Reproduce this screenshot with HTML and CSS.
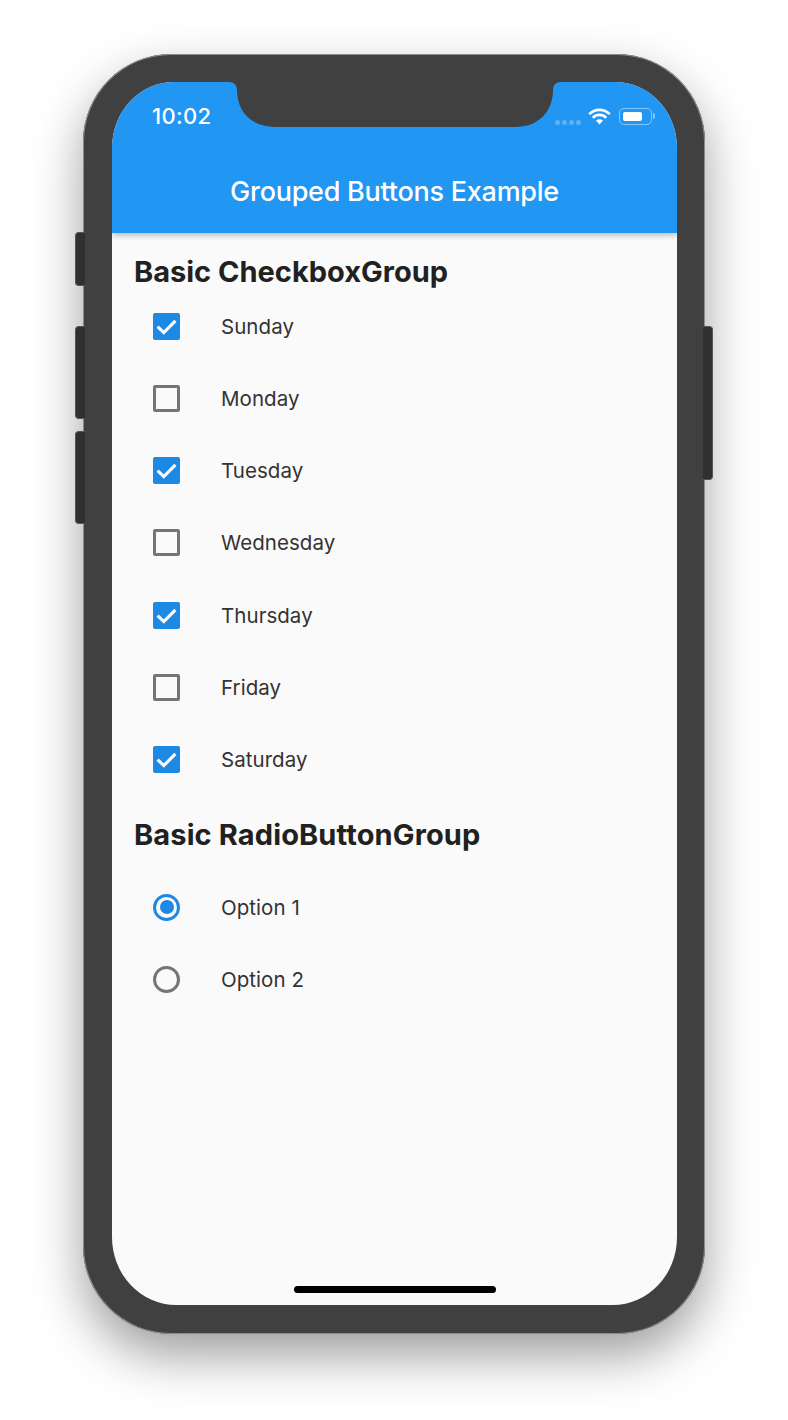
FILE: index.html
```html
<!DOCTYPE html>
<html lang="en">
<head>
<meta charset="utf-8">
<title>Grouped Buttons Example</title>
<link rel="stylesheet" href="styles.css">
</head>
<body>
<div class="stage">
  <div class="phone">
    <span class="side side-l1"></span>
    <span class="side side-l2"></span>
    <span class="side side-l3"></span>
    <span class="side side-r1"></span>
    <main class="screen">
      <header class="appbar">
        <div class="status">
          <span class="time">10:02</span>
          <div class="status-icons">
            <div class="signal"><i></i><i></i><i></i><i></i></div>
            <svg class="wifi" width="23" height="17" viewBox="0 0 23 17"><path d="M1.2 6.2A14.5 14.5 0 0 1 21.8 6.2M4.8 9.8A9.2 9.2 0 0 1 18.2 9.8" fill="none" stroke="#fff" stroke-width="2.6"/><path d="M8 12.6A5 5 0 0 1 15 12.6L11.5 16.6Z" fill="#fff"/></svg>
            <div class="battery"><div class="battery-fill"></div></div>
          </div>
        </div>
        <h1 class="title">Grouped Buttons Example</h1>
      </header>
      <svg class="notch" width="336" height="45" viewBox="0 0 336 45"><path d="M2 0C7 0 10 3 10 8C10 29 24 45 48 45H288C312 45 326 29 326 8C326 3 329 0 334 0Z" fill="#404040"/></svg>
      <section class="content">
        <h2 class="heading">Basic CheckboxGroup</h2>
        <ul class="group">
          <li class="row"><span class="box on"><svg width="27" height="27" viewBox="0 0 27 27"><path d="M4.6 13.6L10.8 19.6L22.4 7.8" fill="none" stroke="#fafafa" stroke-width="3.2"/></svg></span><span class="label">Sunday</span></li>
          <li class="row"><span class="box"></span><span class="label">Monday</span></li>
          <li class="row"><span class="box on"><svg width="27" height="27" viewBox="0 0 27 27"><path d="M4.6 13.6L10.8 19.6L22.4 7.8" fill="none" stroke="#fafafa" stroke-width="3.2"/></svg></span><span class="label">Tuesday</span></li>
          <li class="row"><span class="box"></span><span class="label">Wednesday</span></li>
          <li class="row"><span class="box on"><svg width="27" height="27" viewBox="0 0 27 27"><path d="M4.6 13.6L10.8 19.6L22.4 7.8" fill="none" stroke="#fafafa" stroke-width="3.2"/></svg></span><span class="label">Thursday</span></li>
          <li class="row"><span class="box"></span><span class="label">Friday</span></li>
          <li class="row"><span class="box on"><svg width="27" height="27" viewBox="0 0 27 27"><path d="M4.6 13.6L10.8 19.6L22.4 7.8" fill="none" stroke="#fafafa" stroke-width="3.2"/></svg></span><span class="label">Saturday</span></li>
        </ul>
        <h2 class="heading heading-radio">Basic RadioButtonGroup</h2>
        <ul class="group group-radio">
          <li class="row"><span class="radio on"><span class="dot"></span></span><span class="label">Option 1</span></li>
          <li class="row"><span class="radio"></span><span class="label">Option 2</span></li>
        </ul>
      </section>
      <span class="home"></span>
    </main>
  </div>
</div>
</body>
</html>
```
FILE: styles.css
```css
* { box-sizing: border-box; }
html, body { margin: 0; padding: 0; background: #fff; }
body { font-family: Inter, "Liberation Sans", sans-serif; }
.stage { width: 788px; height: 1420px; padding: 54px 83px 0; overflow: hidden; }
.phone {
  position: relative;
  width: 622px;
  height: 1280px;
  padding: 28px 28px;
  background: #404040;
  border-radius: 88px;
  box-shadow: 0 0 0 1px #8c8c8c inset, 0 22px 50px rgba(0, 0, 0, .38);
}
.side { position: absolute; background: #303030; border: 1px solid #555; }
.side-l1, .side-l2, .side-l3 { left: -8px; width: 10px; border-right: 0; border-radius: 4px 0 0 4px; }
.side-l1 { top: 178px; height: 54px; }
.side-l2 { top: 272px; height: 93px; }
.side-l3 { top: 377px; height: 93px; }
.side-r1 { right: -8px; top: 272px; width: 10px; height: 154px; border-left: 0; border-radius: 0 4px 4px 0; }
.screen {
  position: relative;
  display: flex;
  flex-direction: column;
  width: 565px;
  height: 1223px;
  margin: 0 0 0 1px;
  background: #fafafa;
  border-radius: 62px 62px 64px 64px / 66px 66px 68px 68px;
  overflow: hidden;
}
.appbar {
  position: relative;
  z-index: 1;
  flex: none;
  height: 151px;
  background: #2196f3;
  box-shadow: 0 2px 6px rgba(0, 0, 0, .28);
  color: #fff;
}
.notch { position: absolute; z-index: 2; left: 115px; top: 0; }
.status { display: flex; justify-content: space-between; align-items: center; height: 34px; padding: 17px 25px 0 40px; box-sizing: content-box; }
.time { font-size: 22px; font-weight: 500; letter-spacing: .3px; line-height: 34px; }
.status-icons { display: flex; align-items: center; gap: 8px; }
.signal { display: flex; gap: 2px; margin-top: 12px; margin-right: -1px; }
.signal i { width: 5px; height: 5px; border-radius: 50%; background: rgba(255, 255, 255, .28); }
.wifi { display: block; }
.battery {
  position: relative;
  width: 33px;
  height: 17px;
  padding: 3px;
  border: 1px solid rgba(255, 255, 255, .45);
  border-radius: 5px;
}
.battery::after {
  content: "";
  position: absolute;
  right: -4px;
  top: 4px;
  width: 2px;
  height: 6px;
  border-radius: 0 2px 2px 0;
  background: rgba(255, 255, 255, .45);
}
.battery-fill { width: 19px; height: 9px; background: #fff; border-radius: 2px; }
.title {
  margin: 41px 0 0;
  font-size: 27px;
  font-weight: 500;
  line-height: 36px;
  letter-spacing: -.25px;
  text-align: center;
}
.content { flex: 1; padding: 22px 0 0; }
.heading {
  margin: 0 0 0 22px;
  font-size: 29px;
  font-weight: 700;
  line-height: 34px;
  color: #212121;
}
.heading-radio { margin-top: 22px; letter-spacing: .12px; }
.group { list-style: none; margin: 1px 0 0; padding: 0; }
.group-radio { margin-top: 19.5px; }
.row { display: flex; align-items: center; height: 72.25px; padding-left: 41px; }
.box, .radio { flex: none; width: 27px; height: 27px; margin-right: 41px; }
.box { border: 3px solid #757575; border-radius: 2px; }
.box.on { position: relative; border: 0; background: #1e88e5; }
.box svg { display: block; }
.radio { display: flex; align-items: center; justify-content: center; border: 3px solid #757575; border-radius: 50%; }
.radio.on { border-color: #1e88e5; }
.dot { width: 14px; height: 14px; border-radius: 50%; background: #1e88e5; }
.label { padding-top: 1px; font-size: 20.5px; line-height: 28px; color: #333; letter-spacing: .05px; }
.home { position: absolute; left: 182px; bottom: 12px; width: 202px; height: 7px; border-radius: 4px; background: #000; }
```
